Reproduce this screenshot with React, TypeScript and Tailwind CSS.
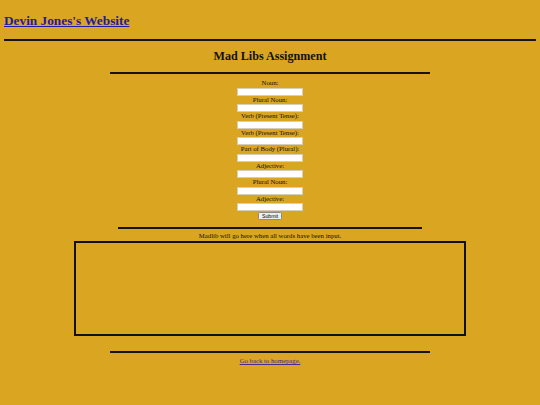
const fields = [
  'Noun:',
  'Plural Noun:',
  'Verb (Present Tense):',
  'Verb (Present Tense):',
  'Part of Body (Plural):',
  'Adjective:',
  'Plural Noun:',
  'Adjective:',
];

export default function App() {
  return (
    <div className="min-h-[405px] bg-[#DAA520] pt-[14px] font-['Liberation_Serif',serif] text-[#111]">
      <div className="px-[4px] text-[13.3px] leading-none font-bold">
        <a href="#" className="text-[#2419a6] underline">
          Devin Jones's Website
        </a>
      </div>
      <div className="mx-[4px] mt-[12px] h-[2px] bg-[#161410]" />

      <section className="flex flex-col items-center">
        <h2 className="mt-[9px] text-[12.1px] leading-none font-bold">Mad Libs Assignment</h2>
        <div className="mt-[9.7px] h-[2px] w-[320px] bg-[#161410]" />

        <form className="mt-[5px] flex flex-col items-center">
          {fields.map((label, i) => (
            <div key={i} className="flex flex-col items-center">
              <label className="h-[8.5px] text-[6.75px] leading-[8.5px] whitespace-nowrap">{label}</label>
              <input
                type="text"
                className="h-[8px] w-[66px] border border-[#d6cfb8] bg-white outline-none"
              />
            </div>
          ))}
          <button
            type="button"
            className="mt-[1.3px] flex h-[7.7px] w-[23.5px] items-center justify-center rounded-[1.5px] border-[0.5px] border-[#8a8a8a] bg-[#efefef] font-['Liberation_Sans',sans-serif] text-[5.2px] leading-none text-black"
          >
            Submit
          </button>
        </form>

        <div className="mt-[7px] h-[2px] w-[304px] bg-[#161410]" />
        <p className="mt-[2.7px] h-[8px] text-[6.75px] leading-[8px]">
          Madlib will go here when all words have been input.
        </p>
        <div className="mt-[1px] h-[95px] w-[392px] border-2 border-[#111]" />

        <div className="mt-[15px] h-[2px] w-[320px] bg-[#161410]" />
        <a href="#" className="mt-[4.7px] text-[6.75px] leading-[8px] text-[#4a2a8e] underline">
          Go back to homepage.
        </a>
      </section>
    </div>
  );
}
